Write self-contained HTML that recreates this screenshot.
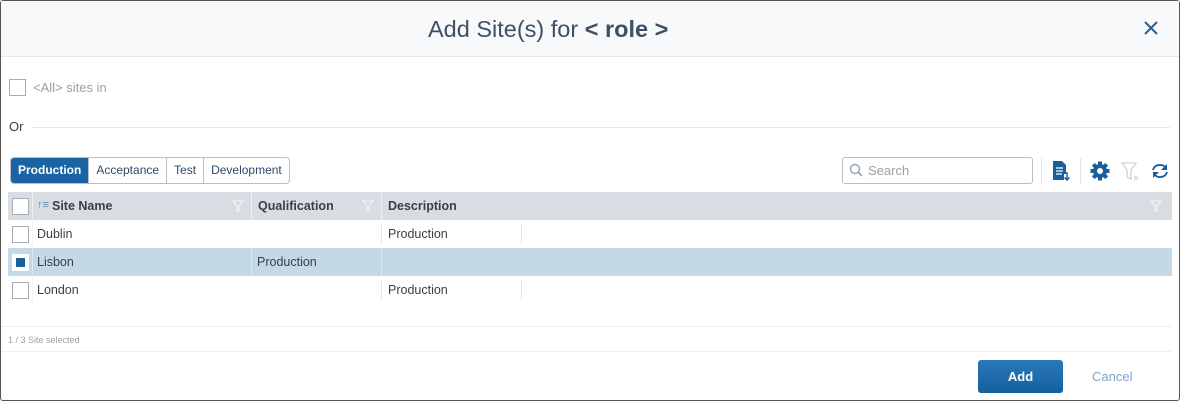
<!DOCTYPE html>
<html><head><style>
*{box-sizing:border-box;margin:0;padding:0}
body{width:1180px;height:401px;font-family:"Liberation Sans",sans-serif;background:#fff;position:relative;overflow:hidden}
.frame{position:absolute;left:0;top:0;width:1180px;height:401px;border:1px solid #555;border-radius:3px}
.hdr{position:absolute;left:1px;top:1px;width:1178px;height:56px;background:#f8f9fb;border-bottom:1px solid #e8ebee}
.title{position:absolute;left:427px;top:15px;font-size:23.5px;color:#3d5064;white-space:nowrap}
.abs{position:absolute}
.cb{position:absolute;width:17px;height:17px;border:1px solid #a8adb2;background:#fff}
.tabs{position:absolute;left:10px;top:157px;height:27px;border:1px solid #b8bfc6;border-radius:4px;display:flex;overflow:hidden;font-size:12px}
.tabs div{padding:0 7px;line-height:25px;color:#2d4a68;border-left:1px solid #b8bfc6}
.tabs div:first-child{border-left:none;background:#1a64a4;color:#fff;font-weight:bold}
.th{position:absolute;top:192px;left:8px;width:1164px;height:28px;background:#d7dde2}
.row{position:absolute;left:8px;width:1164px;height:28px;font-size:12.5px;color:#3a3f44}
.t{position:absolute;top:7px}
.sep{position:absolute;top:4px;width:1px;height:20px;background:#e6e9ec}
.hsep{position:absolute;top:0;width:1px;height:28px;background:#f2f4f5}
.fil{position:absolute;top:8px}
</style></head><body>
<div class="frame"></div>
<div class="hdr"><div class="title">Add Site(s) for <b>&lt; role &gt;</b></div>
<svg class="abs" style="left:1143px;top:20px" width="14" height="14"><path d="M1 1L13 13M13 1L1 13" stroke="#2a5f8e" stroke-width="2"/></svg></div>
<div class="cb" style="left:9px;top:79px"></div>
<div class="abs" style="left:33px;top:80px;font-size:13px;color:#9aa0a6">&lt;All&gt; sites in</div>
<div class="abs" style="left:9px;top:119px;font-size:13px;color:#3a3f44">Or</div>
<div class="abs" style="left:32px;top:127px;width:1138px;height:1px;background:#e6e9ec"></div>
<div class="tabs"><div>Production</div><div>Acceptance</div><div>Test</div><div>Development</div></div>
<div class="abs" style="left:842px;top:157px;width:191px;height:27px;border:1px solid #b8bec4;border-radius:3px"></div>
<svg class="abs" style="left:849px;top:163px" width="14" height="14"><circle cx="6" cy="6" r="4.5" fill="none" stroke="#9aa8b6" stroke-width="1.5"/><path d="M9 9L13 13" stroke="#9aa8b6" stroke-width="1.8"/></svg>
<div class="abs" style="left:868px;top:163px;font-size:13px;color:#9aa0a6">Search</div>
<div class="abs" style="left:1041px;top:158px;width:1px;height:26px;background:#e3e6e9"></div>
<div class="abs" style="left:1080px;top:158px;width:1px;height:26px;background:#e3e6e9"></div>
<svg class="abs" style="left:1051px;top:160px" width="20" height="22"><path d="M2 1h9l4 4v9h-2v6H2z" fill="#1a5f9c"/><path d="M5 8h7M5 11h7M5 14h6" stroke="#fff" stroke-width="1.3"/><path d="M16 12v8M13.5 17.5L16 20l2.5-2.5" stroke="#1a5f9c" stroke-width="1.5" fill="none"/></svg>
<svg class="abs" style="left:1090px;top:161px" width="20" height="20" viewBox="0 0 20 20"><g fill="#1a5f9c"><circle cx="10" cy="10" r="7"/><rect x="8" y="0.5" width="4" height="19"/><rect x="0.5" y="8" width="19" height="4"/><rect x="8" y="0.5" width="4" height="19" transform="rotate(45 10 10)"/><rect x="8" y="0.5" width="4" height="19" transform="rotate(-45 10 10)"/></g><circle cx="10" cy="10" r="3" fill="#fff"/></svg>
<svg class="abs" style="left:1121px;top:162px" width="20" height="20"><path d="M1 1h14l-5 7v9l-4-2V8z" fill="none" stroke="#cdd3d8" stroke-width="1.3"/><path d="M13 14l4 4M17 14l-4 4" stroke="#cdd3d8" stroke-width="1.2"/></svg>
<svg class="abs" style="left:1150px;top:162px" width="20" height="18"><path d="M3 8a7 6 0 0 1 13-2" fill="none" stroke="#1a5f9c" stroke-width="2"/><path d="M17 2v6h-6z" fill="#1a5f9c"/><path d="M17 10a7 6 0 0 1-13 2" fill="none" stroke="#1a5f9c" stroke-width="2"/><path d="M3 16v-6h6z" fill="#1a5f9c"/></svg>
<div class="th">
<div class="cb" style="left:4px;top:6px"></div>
<div class="hsep" style="left:24px;background:#eef1f3"></div>
<div class="t" style="left:29px;font-size:11px;color:#5b8ab5;top:7px">↑≡</div>
<div class="t" style="left:44px;font-size:12.5px;font-weight:bold;color:#3a4046">Site Name</div>
<svg class="fil" style="left:224px" width="12" height="12"><path d="M1 1h10l-4 5v5H5V6z" fill="none" stroke="#f4f6f7" stroke-width="1.1"/></svg>
<div class="hsep" style="left:243px;background:#eef1f3"></div>
<div class="t" style="left:250px;font-size:12.5px;font-weight:bold;color:#3a4046">Qualification</div>
<svg class="fil" style="left:354px" width="12" height="12"><path d="M1 1h10l-4 5v5H5V6z" fill="none" stroke="#f4f6f7" stroke-width="1.1"/></svg>
<div class="hsep" style="left:373px;background:#eef1f3"></div>
<div class="t" style="left:380px;font-size:12.5px;font-weight:bold;color:#3a4046">Description</div>
<svg class="fil" style="left:1142px" width="12" height="12"><path d="M1 1h10l-4 5v5H5V6z" fill="none" stroke="#f4f6f7" stroke-width="1.1"/></svg>
</div>
<div class="row" style="top:220px"><div class="cb" style="left:4px;top:6px"></div><div class="hsep" style="left:24px"></div><div class="t" style="left:29px">Dublin</div><div class="sep" style="left:373px"></div><div class="t" style="left:380px">Production</div><div class="sep" style="left:513px"></div></div>
<div class="row" style="top:248px;background:#c3d9e8"><div class="cb" style="left:4px;top:6px;border-color:#fff"><div style="position:absolute;left:3px;top:3px;width:9px;height:9px;background:#1a5f9c"></div></div><div class="hsep" style="left:24px;background:#dde8f0"></div><div class="t" style="left:29px">Lisbon</div><div class="hsep" style="left:243px;background:#dde8f0"></div><div class="t" style="left:249px">Production</div><div class="hsep" style="left:373px;background:#dde8f0"></div></div>
<div class="row" style="top:276px"><div class="cb" style="left:4px;top:6px"></div><div class="hsep" style="left:24px"></div><div class="t" style="left:29px">London</div><div class="sep" style="left:373px"></div><div class="t" style="left:380px">Production</div><div class="sep" style="left:513px"></div></div>
<div class="abs" style="left:1px;top:326px;width:1170px;height:1px;background:#eceef0"></div>
<div class="abs" style="left:8px;top:335px;font-size:9px;color:#9aa0a6">1 / 3 Site selected</div>
<div class="abs" style="left:1px;top:351px;width:1170px;height:1px;background:#eceef0"></div>
<div class="abs" style="left:978px;top:360px;width:85px;height:33px;border-radius:3px;background:linear-gradient(#2a78b8,#15609f);color:#fff;font-size:13px;font-weight:bold;text-align:center;line-height:33px">Add</div>
<div class="abs" style="left:1092px;top:369px;font-size:13px;color:#7aa3c8">Cancel</div>
</body></html>
